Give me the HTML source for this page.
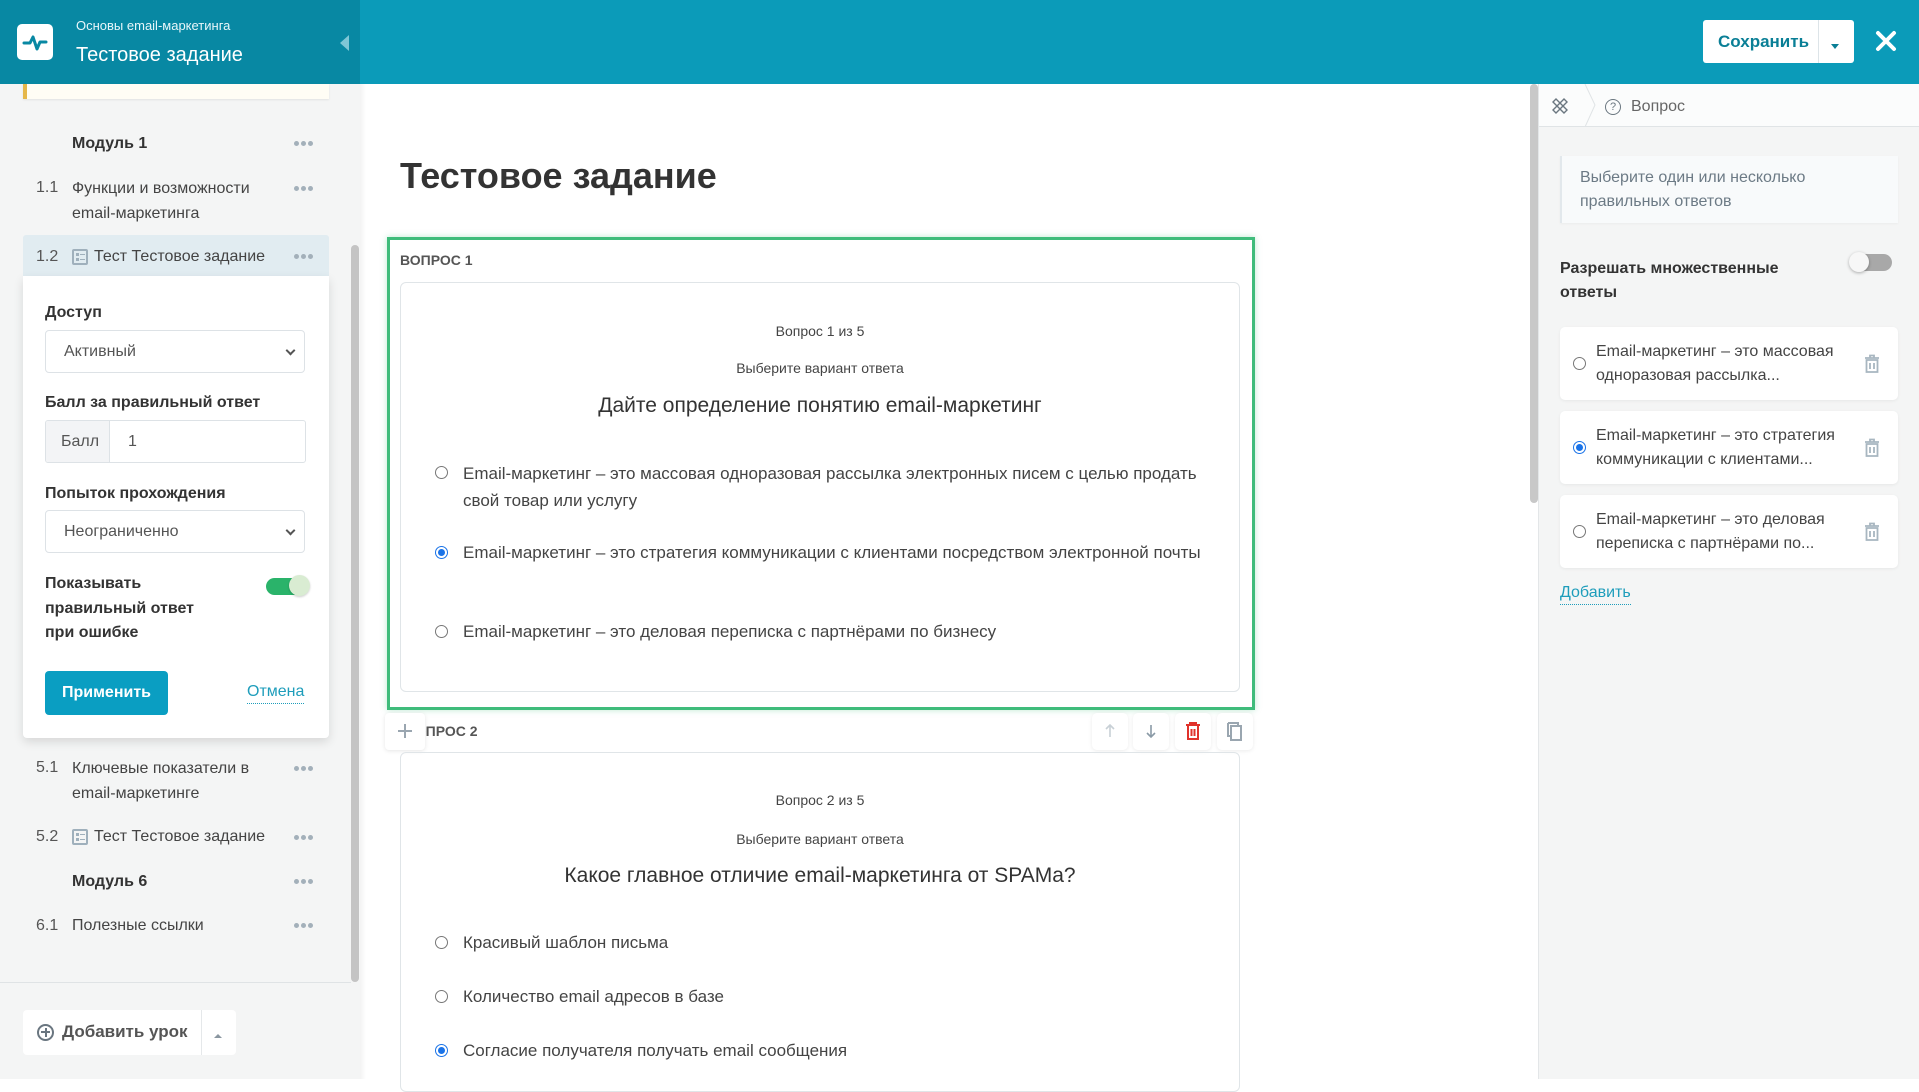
<!DOCTYPE html>
<html><head><meta charset="utf-8"><style>
*{box-sizing:border-box;margin:0;padding:0}
body{width:1919px;height:1079px;overflow:hidden;position:relative;font-family:"Liberation Sans","DejaVu Sans",sans-serif;color:#333;background:#fff}
.a{position:absolute}
.t{position:absolute;white-space:nowrap;font-size:16px;line-height:24px}
.b{font-weight:bold}
.dots{position:absolute;width:20px;height:6px}
.dots i{position:absolute;top:0;width:5px;height:5px;border-radius:50%;background:#a3b0ba}
.radio{position:absolute;width:13px;height:13px;border:1px solid #777;border-radius:50%;background:#fff}
.radio.on{border:1px solid #1a73e8}
.radio.on::after{content:"";position:absolute;left:2px;top:2px;width:7px;height:7px;border-radius:50%;background:#1a73e8}
.sel{position:absolute;border:1px solid #dde2e6;border-radius:4px;background:#fff}
.chev{position:absolute;right:10px;top:16px;width:7px;height:7px;border-right:2px solid #555;border-bottom:2px solid #555;transform:rotate(45deg)}
.card{position:absolute;background:#fff;border-radius:5px;box-shadow:0 1px 3px rgba(0,0,0,.06)}
.ti{position:absolute;width:16px;height:16px;border:2px solid #9fb0bc;border-radius:2px}
.ti::before{content:"";position:absolute;left:2px;top:2px;width:3px;height:8px;border-top:3px solid #9fb0bc;border-bottom:3px solid #9fb0bc;box-sizing:border-box}
.ti::after{content:"";position:absolute;left:6px;top:3px;width:5px;height:6px;border-top:1.5px solid #9fb0bc;border-bottom:1.5px solid #9fb0bc;box-sizing:border-box}
</style></head><body>
<!-- header -->
<div class="a" style="left:0;top:0;width:1919px;height:84px;background:#0b9bb9"></div>
<div class="a" style="left:0;top:0;width:360px;height:84px;background:#0888a3"></div>
<div class="a" style="left:17px;top:24px;width:36px;height:36px;background:#fff;border-radius:5px"></div>
<svg class="a" style="left:17px;top:24px" width="36" height="36" viewBox="0 0 36 36"><path d="M7 19h6l3-6 4 12 3-7h6" fill="none" stroke="#0888a3" stroke-width="3" stroke-linejoin="round" stroke-linecap="round"/></svg>
<div class="t" style="left:76px;top:17px;font-size:13px;line-height:18px;color:#e8f6fa">Основы email-маркетинга</div>
<div class="t" style="left:76px;top:41px;font-size:20px;line-height:28px;color:#fff">Тестовое задание</div>
<div class="a" style="left:340px;top:35px;width:0;height:0;border-top:8px solid transparent;border-bottom:8px solid transparent;border-right:9px solid #7fc6d6"></div>
<div class="a" style="left:1703px;top:20px;width:151px;height:43px;background:#fff;border-radius:3px"></div>
<div class="a" style="left:1818px;top:20px;width:1px;height:43px;background:#dde4e8"></div>
<div class="t b" style="left:1718px;top:30px;font-size:17px;color:#0a7f96">Сохранить</div>
<div class="a" style="left:1831px;top:44px;border-left:4px solid transparent;border-right:4px solid transparent;border-top:5px solid #0a7f96"></div>
<svg class="a" style="left:1875px;top:30px" width="22" height="22" viewBox="0 0 22 22"><path d="M3 3L19 19M19 3L3 19" stroke="#fff" stroke-width="4" stroke-linecap="round"/></svg>

<!-- sidebar -->
<div class="a" style="left:0;top:84px;width:360px;height:995px;background:#f4f5f5"></div>
<div class="a" style="left:23px;top:84px;width:306px;height:15px;background:#fffdf5;border-left:4px solid #e5b74a;box-shadow:0 1px 2px rgba(0,0,0,.08)"></div>
<div class="a" style="left:351px;top:245px;width:8px;height:737px;background:#c4c4c4;border-radius:4px"></div>
<div class="t b" style="left:72px;top:132px">Модуль 1</div>
<div class="dots" style="left:294px;top:141px"><i style="left:0"></i><i style="left:7px"></i><i style="left:14px"></i></div>
<div class="t" style="left:36px;top:176px;color:#555">1.1</div>
<div class="t" style="left:72px;top:176px;line-height:25px;color:#444">Функции и возможности<br>email-маркетинга</div>
<div class="dots" style="left:294px;top:186px"><i style="left:0"></i><i style="left:7px"></i><i style="left:14px"></i></div>
<div class="a" style="left:23px;top:235px;width:306px;height:42px;background:#e1ecf1;border-radius:3px 3px 0 0"></div>
<div class="t" style="left:36px;top:245px;color:#555">1.2</div>
<div class="ti" style="left:72px;top:249px"></div>
<div class="t" style="left:94px;top:245px;color:#444">Тест Тестовое задание</div>
<div class="dots" style="left:294px;top:254px"><i style="left:0"></i><i style="left:7px"></i><i style="left:14px"></i></div>

<div class="a" style="left:23px;top:276px;width:306px;height:462px;background:#fff;border-radius:0 0 4px 4px;box-shadow:0 4px 10px rgba(0,0,0,.12)"></div>
<div class="t b" style="left:45px;top:301px">Доступ</div>
<div class="sel" style="left:45px;top:330px;width:260px;height:43px"><div class="t" style="left:18px;top:9px;color:#555">Активный</div><div class="chev"></div></div>
<div class="t b" style="left:45px;top:391px">Балл за правильный ответ</div>
<div class="sel" style="left:45px;top:420px;width:261px;height:43px;border-radius:3px;overflow:hidden"><div class="a" style="left:0;top:0;width:64px;height:41px;background:#f3f4f6;border-right:1px solid #dde2e6"></div><div class="t" style="left:15px;top:9px;color:#555">Балл</div><div class="t" style="left:82px;top:9px;color:#555">1</div></div>
<div class="t b" style="left:45px;top:482px">Попыток прохождения</div>
<div class="sel" style="left:45px;top:510px;width:260px;height:43px"><div class="t" style="left:18px;top:9px;color:#555">Неограниченно</div><div class="chev"></div></div>
<div class="t b" style="left:45px;top:572px;line-height:24.5px">Показывать<br>правильный ответ<br>при ошибке</div>
<div class="a" style="left:266px;top:578px;width:40px;height:17px;background:#2ab36a;border-radius:9px"></div>
<div class="a" style="left:289px;top:575px;width:21px;height:21px;background:#d9ecd2;border-radius:50%;box-shadow:0 1px 2px rgba(0,0,0,.2)"></div>
<div class="a" style="left:45px;top:671px;width:123px;height:44px;background:#0a9ec2;border-radius:4px"></div>
<div class="t b" style="left:45px;top:681px;width:123px;text-align:center;color:#fff">Применить</div>
<div class="t" style="left:247px;top:681px;color:#1e9dbb;border-bottom:1px dotted #1e9dbb;line-height:22px">Отмена</div>

<div class="t" style="left:36px;top:756px;color:#555">5.1</div>
<div class="t" style="left:72px;top:756px;line-height:25px;color:#444">Ключевые показатели в<br>email-маркетинге</div>
<div class="dots" style="left:294px;top:766px"><i style="left:0"></i><i style="left:7px"></i><i style="left:14px"></i></div>
<div class="t" style="left:36px;top:825px;color:#555">5.2</div>
<div class="ti" style="left:72px;top:829px"></div>
<div class="t" style="left:94px;top:825px;color:#444">Тест Тестовое задание</div>
<div class="dots" style="left:294px;top:835px"><i style="left:0"></i><i style="left:7px"></i><i style="left:14px"></i></div>
<div class="t b" style="left:72px;top:870px">Модуль 6</div>
<div class="dots" style="left:294px;top:879px"><i style="left:0"></i><i style="left:7px"></i><i style="left:14px"></i></div>
<div class="t" style="left:36px;top:914px;color:#555">6.1</div>
<div class="t" style="left:72px;top:914px;color:#444">Полезные ссылки</div>
<div class="dots" style="left:294px;top:923px"><i style="left:0"></i><i style="left:7px"></i><i style="left:14px"></i></div>
<div class="a" style="left:0;top:982px;width:351px;height:1px;background:#dfe3e5"></div>
<div class="a" style="left:23px;top:1010px;width:213px;height:45px;background:#fff;border-radius:4px"></div>
<div class="a" style="left:201px;top:1010px;width:1px;height:45px;background:#e5e8ea"></div>
<div class="a" style="left:37px;top:1024px;width:17px;height:17px;border:2px solid #6a7680;border-radius:50%"></div>
<div class="a" style="left:41px;top:1031px;width:9px;height:2px;background:#6a7680"></div>
<div class="a" style="left:44.5px;top:1028px;width:2px;height:9px;background:#6a7680"></div>
<div class="t b" style="left:62px;top:1020px;font-size:17px;color:#555">Добавить урок</div>
<div class="a" style="left:214px;top:1034px;border-left:4px solid transparent;border-right:4px solid transparent;border-bottom:4px solid #8a96a0"></div>

<!-- main -->
<div class="a" style="left:360px;top:84px;width:6px;height:995px;background:linear-gradient(90deg,rgba(0,0,0,.05),transparent)"></div>
<div class="t" style="left:400px;top:153px;font-size:36px;line-height:46px;font-weight:bold;color:#333">Тестовое задание</div>
<div class="a" style="left:387px;top:237px;width:868px;height:473px;border:3px solid #3fbc7b;box-shadow:0 0 6px rgba(63,188,123,.35)"></div>
<div class="t b" style="left:400px;top:251px;font-size:14px;line-height:18px;color:#555">ВОПРОС 1</div>
<div class="a" style="left:400px;top:282px;width:840px;height:410px;border:1px solid #e0e5e8;border-radius:6px"></div>
<div class="t" style="left:400px;top:321px;width:840px;text-align:center;font-size:14px;line-height:20px;color:#444">Вопрос 1 из 5</div>
<div class="t" style="left:400px;top:358px;width:840px;text-align:center;font-size:14px;line-height:20px;color:#444">Выберите вариант ответа</div>
<div class="t" style="left:400px;top:392px;width:840px;text-align:center;font-size:21px;line-height:28px;color:#333">Дайте определение понятию email-маркетинг</div>
<div class="radio" style="left:435px;top:466px"></div>
<div class="t" style="left:463px;top:460px;font-size:17px;line-height:27px;color:#444">Email-маркетинг – это массовая одноразовая рассылка электронных писем с целью продать<br>свой товар или услугу</div>
<div class="radio on" style="left:435px;top:546px"></div>
<div class="t" style="left:463px;top:540px;font-size:17px;line-height:26px;color:#444">Email-маркетинг – это стратегия коммуникации с клиентами посредством электронной почты</div>
<div class="radio" style="left:435px;top:625px"></div>
<div class="t" style="left:463px;top:619px;font-size:17px;line-height:26px;color:#444">Email-маркетинг – это деловая переписка с партнёрами по бизнесу</div>

<div class="t b" style="left:405px;top:722px;font-size:14px;line-height:18px;color:#555">ВОПРОС 2</div>
<div class="a" style="left:385px;top:713px;width:40px;height:37px;background:#fff;border-radius:4px;box-shadow:0 1px 4px rgba(0,0,0,.1)"></div>
<div class="a" style="left:398px;top:730px;width:14px;height:2px;background:#9aa6b0"></div>
<div class="a" style="left:404px;top:724px;width:2px;height:14px;background:#9aa6b0"></div>
<div class="card" style="left:1092px;top:713px;width:36px;height:37px;box-shadow:0 1px 4px rgba(0,0,0,.08)"></div>
<div class="card" style="left:1133px;top:713px;width:36px;height:37px;box-shadow:0 1px 4px rgba(0,0,0,.08)"></div>
<div class="card" style="left:1175px;top:713px;width:36px;height:37px;box-shadow:0 1px 4px rgba(0,0,0,.08)"></div>
<div class="card" style="left:1217px;top:713px;width:36px;height:37px;box-shadow:0 1px 4px rgba(0,0,0,.08)"></div>
<svg class="a" style="left:1103px;top:723px" width="14" height="16" viewBox="0 0 14 16"><path d="M7 14V2M3 6l4-4 4 4" fill="none" stroke="#c8d0d6" stroke-width="1.6"/></svg>
<svg class="a" style="left:1144px;top:723px" width="14" height="16" viewBox="0 0 14 16"><path d="M7 2v12M3 10l4 4 4-4" fill="none" stroke="#8a9aa6" stroke-width="1.6"/></svg>
<svg class="a" style="left:1185px;top:721px" width="16" height="20" viewBox="0 0 16 20"><path d="M1 4h14M5 4V2h6v2M3 4v14h10V4M6.5 8v7M9.5 8v7" fill="none" stroke="#e0322b" stroke-width="2"/></svg>
<svg class="a" style="left:1226px;top:721px" width="18" height="20" viewBox="0 0 18 20"><path d="M5 5h10v14H5zM2 2h10v2M2 2v13h2" fill="none" stroke="#9aa6b0" stroke-width="2"/></svg>
<div class="a" style="left:400px;top:752px;width:840px;height:340px;border:1px solid #e0e5e8;border-radius:6px"></div>
<div class="t" style="left:400px;top:790px;width:840px;text-align:center;font-size:14px;line-height:20px;color:#444">Вопрос 2 из 5</div>
<div class="t" style="left:400px;top:829px;width:840px;text-align:center;font-size:14px;line-height:20px;color:#444">Выберите вариант ответа</div>
<div class="t" style="left:400px;top:862px;width:840px;text-align:center;font-size:21px;line-height:28px;color:#333">Какое главное отличие email-маркетинга от SPAMа?</div>
<div class="radio" style="left:435px;top:936px"></div>
<div class="t" style="left:463px;top:930px;font-size:17px;line-height:26px;color:#444">Красивый шаблон письма</div>
<div class="radio" style="left:435px;top:990px"></div>
<div class="t" style="left:463px;top:984px;font-size:17px;line-height:26px;color:#444">Количество email адресов в базе</div>
<div class="radio on" style="left:435px;top:1044px"></div>
<div class="t" style="left:463px;top:1038px;font-size:17px;line-height:26px;color:#444">Согласие получателя получать email сообщения</div>

<div class="a" style="left:1530px;top:84px;width:8px;height:419px;background:#c8c8c8;border-radius:4px"></div>

<!-- right panel -->
<div class="a" style="left:1538px;top:84px;width:381px;height:995px;background:#f4f5f5;border-left:1px solid #e3e6e8"></div>
<div class="a" style="left:1539px;top:84px;width:380px;height:43px;background:#fbfcfc;border-bottom:1px solid #e0e4e6"></div>
<svg class="a" style="left:1550px;top:96px" width="20" height="20" viewBox="0 0 20 20"><path d="M3 6l3-3 11 11-3 3zM14 3l3 3-11 11-3-3zM6 11l2-2M9 14l2-2M11 6l2-2" fill="none" stroke="#6b7780" stroke-width="1.4"/></svg>
<svg class="a" style="left:1584px;top:84px" width="12" height="43" viewBox="0 0 12 43"><path d="M1 0l10 21L1 43" fill="none" stroke="#e0e4e6" stroke-width="1"/></svg>
<div class="a" style="left:1605px;top:99px;width:16px;height:16px;border:1.5px solid #6b7780;border-radius:50%"></div>
<div class="t" style="left:1605px;top:99px;width:16px;text-align:center;font-size:11px;line-height:16px;color:#6b7780">?</div>
<div class="t" style="left:1631px;top:95px;color:#666">Вопрос</div>
<div class="a" style="left:1560px;top:156px;width:338px;height:67px;background:#f8fafb;border-left:2px solid #e2e8ec;box-shadow:0 1px 2px rgba(0,0,0,.04)"></div>
<div class="t" style="left:1580px;top:166px;line-height:24px;color:#6c7a85">Выберите один или несколько<br>правильных ответов</div>
<div class="t b" style="left:1560px;top:257px;line-height:24px;color:#333">Разрешать множественные<br>ответы</div>
<div class="a" style="left:1852px;top:254px;width:40px;height:17px;background:#a8a8a8;border-radius:9px"></div>
<div class="a" style="left:1849px;top:252px;width:20px;height:20px;background:#f7f7f7;border-radius:50%;box-shadow:0 1px 3px rgba(0,0,0,.3)"></div>

<div class="card" style="left:1560px;top:327px;width:338px;height:73px"></div>
<div class="radio" style="left:1573px;top:357px"></div>
<div class="t" style="left:1596px;top:340px;line-height:24px;color:#444">Email-маркетинг – это массовая<br>одноразовая рассылка...</div>
<div class="card" style="left:1560px;top:411px;width:338px;height:73px"></div>
<div class="radio on" style="left:1573px;top:441px"></div>
<div class="t" style="left:1596px;top:424px;line-height:24px;color:#444">Email-маркетинг – это стратегия<br>коммуникации с клиентами...</div>
<div class="card" style="left:1560px;top:495px;width:338px;height:73px"></div>
<div class="radio" style="left:1573px;top:525px"></div>
<div class="t" style="left:1596px;top:508px;line-height:24px;color:#444">Email-маркетинг – это деловая<br>переписка с партнёрами по...</div>
<svg class="a" style="left:1864px;top:354px" width="16" height="19" viewBox="0 0 16 19"><path d="M1 4h14M6 4V1.5h4V4M2.5 6h11v12h-11zM6 9v6M10 9v6" fill="none" stroke="#a8b6c0" stroke-width="1.8"/></svg>
<svg class="a" style="left:1864px;top:438px" width="16" height="19" viewBox="0 0 16 19"><path d="M1 4h14M6 4V1.5h4V4M2.5 6h11v12h-11zM6 9v6M10 9v6" fill="none" stroke="#a8b6c0" stroke-width="1.8"/></svg>
<svg class="a" style="left:1864px;top:522px" width="16" height="19" viewBox="0 0 16 19"><path d="M1 4h14M6 4V1.5h4V4M2.5 6h11v12h-11zM6 9v6M10 9v6" fill="none" stroke="#a8b6c0" stroke-width="1.8"/></svg>
<div class="t" style="left:1560px;top:582px;line-height:22px;color:#1e9dbb;border-bottom:1px dotted #1e9dbb">Добавить</div>
</body></html>
